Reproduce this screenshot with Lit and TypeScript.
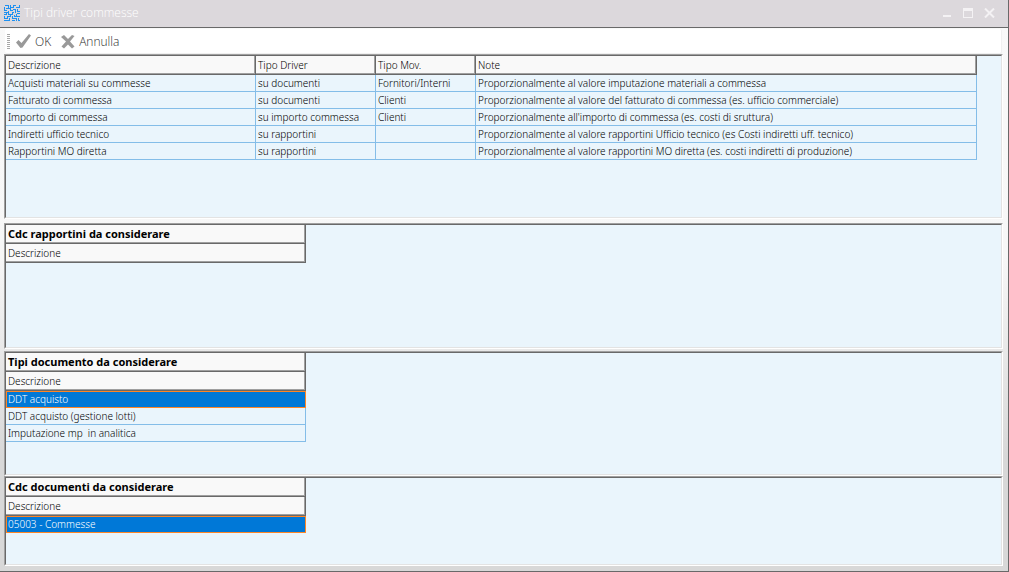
import { LitElement, html, css, svg, nothing } from "lit";
import { customElement, property } from "lit/decorators.js";
import { classMap } from "lit/directives/class-map.js";

interface Column {
  label: string;
  width: number;
}

@customElement("data-grid")
class DataGrid extends LitElement {
  @property() heading = "";
  @property({ attribute: false }) columns: Column[] = [];
  @property({ attribute: false }) rows: string[][] = [];
  @property({ type: Number }) selected = -1;

  static styles = css`
    :host {
      display: block;
      box-sizing: border-box;
      overflow: hidden;
      background: #eaf5fc;
      border: 1px solid;
      border-color: #a0a0a0 #ffffff #ffffff #a0a0a0;
    }
    .inner {
      box-sizing: border-box;
      height: 100%;
      border: 1px solid;
      border-color: #696969 #e3e3e3 #e3e3e3 #696969;
      overflow: hidden;
    }
    table {
      border-collapse: separate;
      border-spacing: 0;
      table-layout: fixed;
      width: 0;
    }
    th,
    td {
      box-sizing: border-box;
      padding: 0 2px;
      text-align: left;
      font-size: 10px;
      font-weight: 300;
      white-space: pre;
      overflow: hidden;
      color: #000;
    }
    th {
      height: 19px;
      line-height: 18px;
      background: #f9f9f9;
      border-right: 1px solid #696969;
      border-bottom: 1px solid #696969;
      box-shadow: inset -1px -1px #a0a0a0;
    }
    .heading {
      font-size: 11px;
      font-weight: 700;
    }
    td {
      height: 17px;
      line-height: 16px;
      border-right: 1px solid #84bde8;
      border-bottom: 1px solid #84bde8;
    }
    .selected td {
      background: #0078d7;
      color: #fff;
      border: 0;
      box-shadow: inset 0 0 0 1px #ff8626;
      padding: 0 2px 1px;
    }
  `;

  render() {
    return html`<div class="inner">
      <table>
        <colgroup>
          ${this.columns.map((c) => html`<col style="width:${c.width}px" />`)}
        </colgroup>
        <thead>
          ${this.heading
            ? html`<tr><th class="heading" colspan=${this.columns.length}>${this.heading}</th></tr>`
            : nothing}
          <tr>${this.columns.map((c) => html`<th scope="col">${c.label}</th>`)}</tr>
        </thead>
        <tbody>
          ${this.rows.map(
            (row, i) => html`<tr class=${classMap({ selected: i === this.selected })}>
              ${row.map((cell) => html`<td>${cell}</td>`)}
            </tr>`
          )}
        </tbody>
      </table>
    </div>`;
  }
}

const DRIVER_COLUMNS: Column[] = [
  { label: "Descrizione", width: 250 },
  { label: "Tipo Driver", width: 120 },
  { label: "Tipo Mov.", width: 100 },
  { label: "Note", width: 501 },
];

const DRIVERS = [
  ["Acquisti materiali su commesse", "su documenti", "Fornitori/Interni", "Proporzionalmente al valore imputazione materiali a commessa"],
  ["Fatturato di commessa", "su documenti", "Clienti", "Proporzionalmente al valore del fatturato di commessa (es. ufficio commerciale)"],
  ["Importo di commessa", "su importo commessa", "Clienti", "Proporzionalmente all'importo di commessa (es. costi di sruttura)"],
  ["Indiretti ufficio tecnico", "su rapportini", "", "Proporzionalmente al valore rapportini Ufficio tecnico (es Costi indiretti uff. tecnico)"],
  ["Rapportini MO diretta", "su rapportini", "", "Proporzionalmente al valore rapportini MO diretta (es. costi indiretti di produzione)"],
];

const DETAIL_COLUMNS: Column[] = [{ label: "Descrizione", width: 300 }];

const appIcon = svg`
  <path fill="none" stroke="#1e90f0" stroke-width="1" d="M1 .5H4.500V3.500M6.500 0V2.500H9.500V.5H12M11.500 2.500H15.500V0M.5 2V5.500H3M2.500 2.500V3.500H6.500V5.500H9M8.500 4.500H11.500V7.500M13.500 4V6.500H16M5 7.500H0M2.500 7.500V9.500H0M4.500 5.500V9.500H8.500V7.500H10M.5 11V13.500H3.500V11.500H6.500V9.500M13 8.500H16M10.500 9.500V11.500H15.500M12.500 8.500V10.500M8.500 11V13.500H12.500V16M5.500 13V15.500H0M7.500 15.500H10.500M14.500 13V15.500H16" />`;

@customElement("app-root")
class AppRoot extends LitElement {
  static styles = css`
    :host {
      display: flex;
      flex-direction: column;
      box-sizing: border-box;
      height: 100vh;
      overflow: hidden;
      font-family: "Noto Sans", "Open Sans", sans-serif;
      background: linear-gradient(#f9f9f9 0%, #f7f7f7 45%, #d8d8d8 80%, #d8d8d8 100%);
      border-right: 1px solid #696969;
      border-bottom: 1px solid #696969;
    }
    button {
      font: inherit;
      color: inherit;
      background: none;
      border: 0;
      padding: 0;
    }
    svg {
      display: block;
      flex: none;
    }
    .titlebar {
      display: flex;
      align-items: center;
      flex: none;
      box-sizing: border-box;
      height: 28px;
      padding: 0 13px 2px 4px;
      background: #dcd8dc;
      border-bottom: 1px solid #696969;
      color: #fff;
    }
    h1 {
      flex: 1;
      margin: 0 0 0 4px;
      font-family: "Open Sans", sans-serif;
      font-size: 12px;
      font-weight: 300;
      line-height: 16px;
    }
    .controls {
      display: flex;
      gap: 11px;
    }
    .toolbar {
      display: flex;
      align-items: center;
      flex: none;
      box-sizing: border-box;
      height: 25px;
      margin: 1px 6px 0 5px;
      padding: 1px 0 0 2px;
      background: #fff;
      border-radius: 2px;
      border-right: 1px solid #f0f0f0;
      border-bottom: 1px solid #f0f0f0;
      color: #2c2c2c;
      font-family: "Open Sans", sans-serif;
      font-size: 12px;
      font-weight: 300;
    }
    .grip {
      width: 3px;
      height: 15px;
      margin-right: 6px;
      background: repeating-linear-gradient(#a8a8a8 0 1px, transparent 1px 2px);
    }
    .tool {
      display: flex;
      align-items: center;
      gap: 4px;
      margin-right: 10px;
      line-height: 16px;
    }
    main {
      display: grid;
      grid-template-rows: 169fr 128fr 125fr 90fr;
      flex: 1;
      min-height: 0;
      padding: 0 5px 5px 4px;
    }
    data-grid {
      min-height: 0;
    }
    .drivers {
      margin-bottom: 4px;
    }
    .reports {
      margin-bottom: 2px;
    }
  `;

  render() {
    return html`
      <header class="titlebar">
        <svg width="16" height="16" viewBox="0 0 16 16" shape-rendering="crispEdges">${appIcon}</svg>
        <h1>Tipi driver commesse</h1>
        <div class="controls">
          <button aria-label="Riduci">
            <svg width="10" height="10" viewBox="0 0 10 10"><path fill="#f4f2f4" d="M1 7h8v2H1z" /></svg>
          </button>
          <button aria-label="Ingrandisci">
            <svg width="10" height="10" viewBox="0 0 10 10">
              <path fill="#f4f2f4" fill-rule="evenodd" d="M0 0h10v10H0zM1 3v6h8V3z" />
            </svg>
          </button>
          <button aria-label="Chiudi">
            <svg width="11" height="10" viewBox="0 0 11 10">
              <path fill="none" stroke="#f4f2f4" stroke-width="2" d="M1 .5 10 9.500M10 .5 1 9.500" />
            </svg>
          </button>
        </div>
      </header>
      <div class="toolbar" role="toolbar">
        <span class="grip"></span>
        <button class="tool">
          <svg width="15" height="15" viewBox="0 0 15 15">
            <path fill="#999" d="M0 8.500 2.500 6 5.500 9 13 0l2 1.500L6.500 13.500 4.500 14z" />
          </svg>
          OK
        </button>
        <button class="tool">
          <svg width="14" height="15" viewBox="0 0 14 15">
            <path fill="#999" d="M0 3 3 1l4 4 4-4 2.500 1L9 7.500l4.500 5L11 14.500 7 10.500 3 14.500.5 12.500 5 7.500z" />
          </svg>
          Annulla
        </button>
      </div>
      <main>
        <data-grid class="drivers" .columns=${DRIVER_COLUMNS} .rows=${DRIVERS}></data-grid>
        <data-grid class="reports" heading="Cdc rapportini da considerare" .columns=${DETAIL_COLUMNS}></data-grid>
        <data-grid
          class="doctypes"
          heading="Tipi documento da considerare"
          .columns=${DETAIL_COLUMNS}
          .rows=${[["DDT acquisto"], ["DDT acquisto (gestione lotti)"], ["Imputazione mp  in analitica"]]}
          .selected=${0}
        ></data-grid>
        <data-grid
          class="doccenters"
          heading="Cdc documenti da considerare"
          .columns=${DETAIL_COLUMNS}
          .rows=${[["05003 - Commesse"]]}
          .selected=${0}
        ></data-grid>
      </main>
    `;
  }
}
